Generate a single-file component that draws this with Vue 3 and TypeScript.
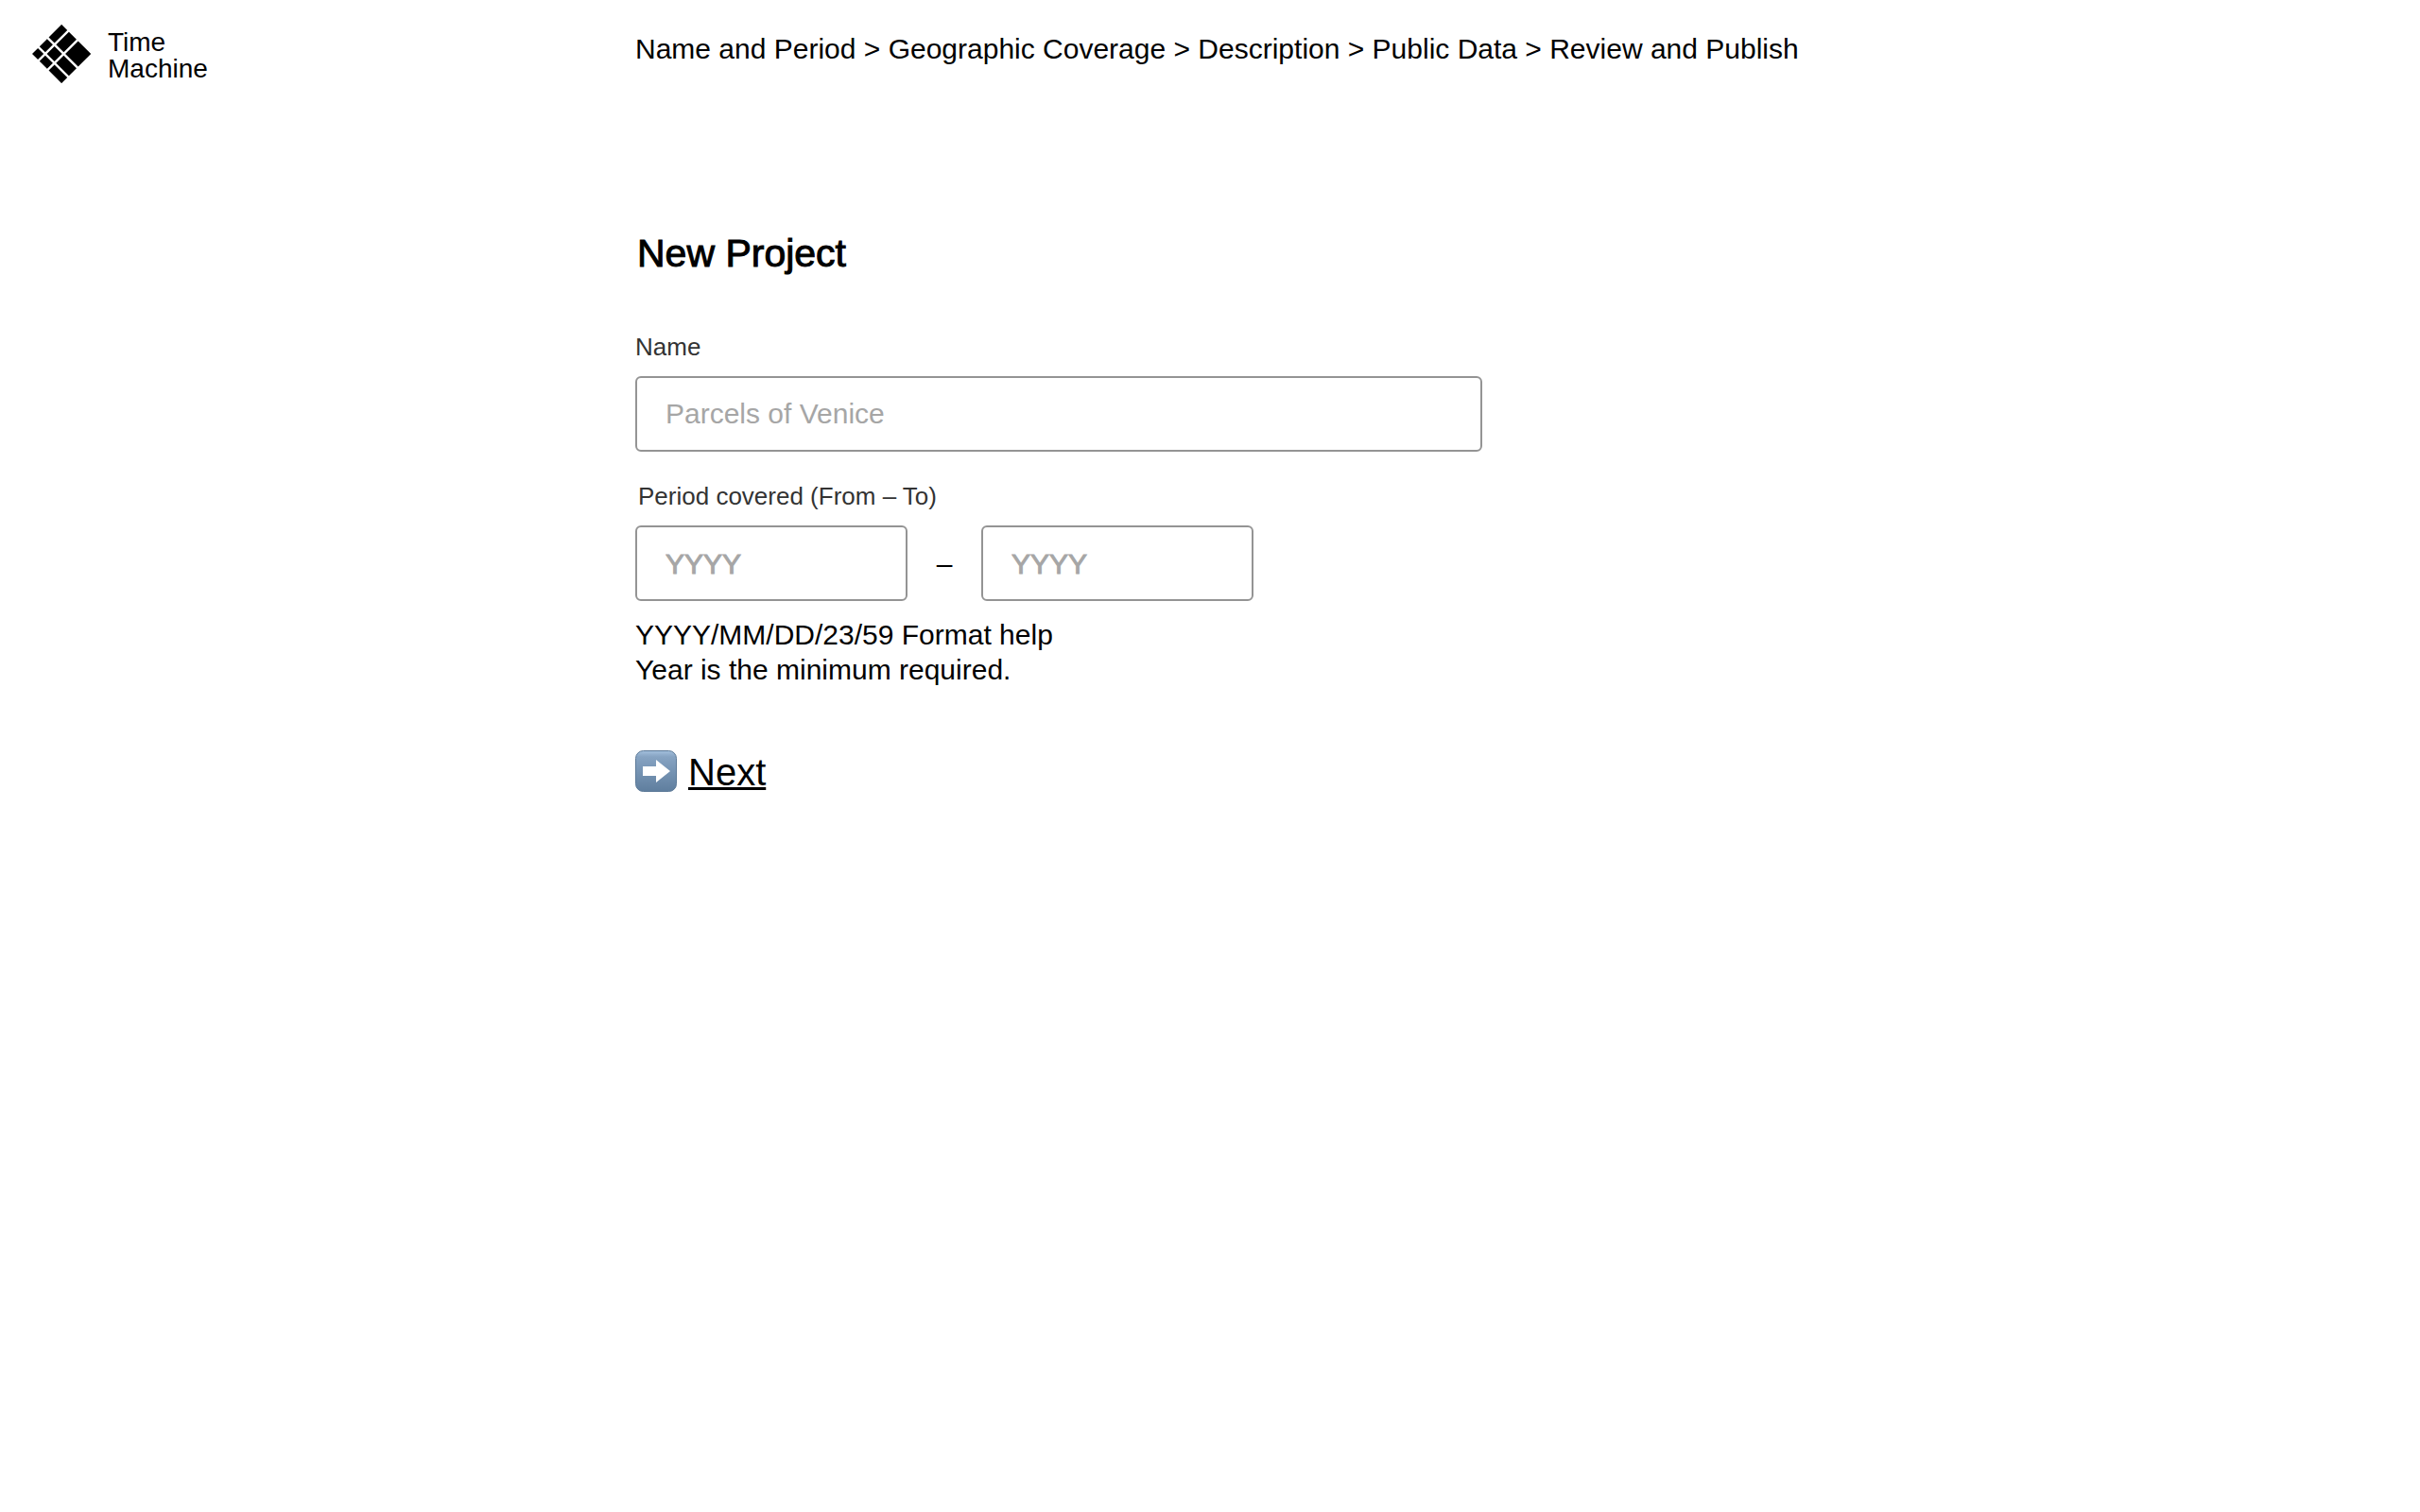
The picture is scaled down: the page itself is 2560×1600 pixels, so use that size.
<script setup lang="ts">
import { ref } from 'vue'

const steps: string[] = ['Name and Period', 'Geographic Coverage', 'Description', 'Public Data', 'Review and Publish']
const name = ref('')
const from = ref('')
const to = ref('')
</script>

<template>
  <div class="page">
    <header class="header">
      <a class="brand" href="#">
        <svg class="logo" viewBox="0 0 62 62" aria-hidden="true">
          <g transform="translate(0 31) rotate(-45)">
            <path d="M0 0h8.6v8.6H0zM11 0h11.4v8.6H11zM24.8 0H44v8.6H24.8zM0 11h8.6v11.4H0zM11 11h11.4v11.4H11zM24.8 11H44v11.4H24.8zM0 24.8h8.6V44H0zM11 24.8h11.4V44H11zM24.8 24.8H44V44H24.8z" />
          </g>
        </svg>
        <span class="brand-name">Time<br />Machine</span>
      </a>
      <nav class="steps" aria-label="Steps">{{ steps.join(' > ') }}</nav>
    </header>

    <main class="main">
      <form class="form" @submit.prevent>
        <h1 class="title">New Project</h1>

        <label class="label" for="name">Name</label>
        <input id="name" v-model="name" class="input" type="text" placeholder="Parcels of Venice" />

        <fieldset class="period">
          <legend class="label period-label">Period covered (From – To)</legend>
          <div class="range">
            <input v-model="from" class="input year" type="text" placeholder="YYYY" aria-label="From" />
            <span class="dash">–</span>
            <input v-model="to" class="input year" type="text" placeholder="YYYY" aria-label="To" />
          </div>
        </fieldset>
        <p class="help">YYYY/MM/DD/23/59 Format help<br />Year is the minimum required.</p>

        <a class="next" href="#">
          <svg class="arrow" viewBox="0 0 44 44" aria-hidden="true">
            <defs>
              <linearGradient id="tile" x1="0" y1="0" x2="0" y2="1">
                <stop offset="0" stop-color="#a3bfdc" />
                <stop offset="0.15" stop-color="#86a3c2" />
                <stop offset="1" stop-color="#5f7e9e" />
              </linearGradient>
            </defs>
            <rect x="0.5" y="0.5" width="43" height="43" rx="8" fill="url(#tile)" stroke="#5d7a98" />
            <path d="M8 17h14v-7l15 12-15 12v-7H8z" fill="#fff" />
          </svg>
          <span class="next-text">Next</span>
        </a>
      </form>
    </main>
  </div>
</template>

<style>
body {
  margin: 0;
  background: #fff;
}
</style>

<style scoped>
.page {
  font-family: "Liberation Sans", Arial, sans-serif;
  font-size: 30px;
  color: #000;
}
.header,
.main {
  display: grid;
  grid-template-columns: 21fr 59fr;
}
.header {
  align-items: start;
  padding-top: 26px;
}
.brand {
  display: flex;
  gap: 18px;
  padding-left: 34px;
  color: #000;
  text-decoration: none;
}
.logo {
  width: 62px;
  height: 62px;
}
.brand-name {
  padding-top: 5px;
  font-size: 28px;
  line-height: 28px;
}
.steps {
  padding-top: 8px;
  line-height: 36px;
}
.form {
  grid-column: 2;
  display: flex;
  flex-direction: column;
  align-items: flex-start;
}
.title {
  margin: 156px 0 0 2px;
  font-size: 41px;
  font-weight: 400;
  line-height: 48px;
  -webkit-text-stroke: 1px #000;
}
.label {
  margin-top: 59px;
  padding: 0;
  font-size: 26px;
  line-height: 32px;
  color: #333;
}
.input {
  box-sizing: border-box;
  width: 896px;
  max-width: 100%;
  height: 80px;
  margin-top: 15px;
  padding: 0 30px;
  border: 2px solid #949494;
  border-radius: 6px;
  background: transparent;
  font: inherit;
  color: #000;
}
.input::placeholder {
  color: #a6a6a6;
  opacity: 1;
}
.period {
  margin: 31px 0 0;
  padding: 0;
  border: 0;
}
.period-label {
  margin: 0 0 0 3px;
}
.range {
  display: flex;
  align-items: center;
  margin-top: 15px;
}
.year {
  width: 288px;
  margin: 0;
  padding-top: 2px;
}
.year::placeholder {
  -webkit-text-stroke: 1px #a6a6a6;
}
.dash {
  width: 78px;
  padding-top: 2px;
  text-align: center;
}
.help {
  margin: 17px 0 0;
  line-height: 37px;
}
.next {
  display: flex;
  align-items: center;
  gap: 12px;
  margin-top: 64px;
  font-size: 40px;
  line-height: 48px;
  color: #000;
  text-decoration: none;
}
.arrow {
  width: 44px;
  height: 44px;
}
.next-text {
  padding-top: 2px;
  text-decoration: underline;
  text-decoration-thickness: 3px;
}
</style>
